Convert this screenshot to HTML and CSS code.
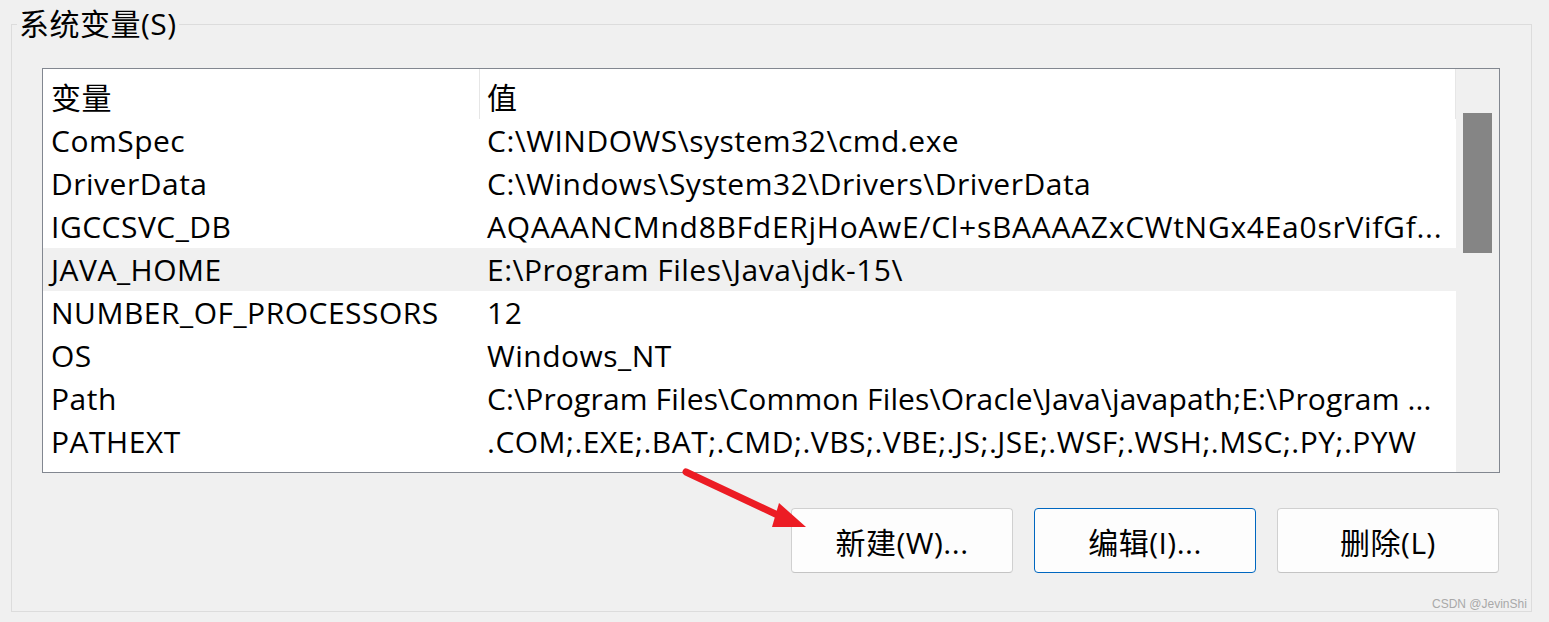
FILE: index.html
```html
<!DOCTYPE html>
<html lang="zh-CN">
<head>
<meta charset="utf-8">
<title>系统变量</title>
<link rel="stylesheet" href="styles.css">
</head>
<body>
<fieldset class="group">
  <legend class="group-title">系统变量(S)</legend>
  <div class="listbox">
    <div class="table">
      <div class="row head">
        <div class="cell name">变量</div>
        <div class="cell value">值</div>
      </div>
      <div class="row"><div class="cell name">ComSpec</div><div class="cell value">C:\WINDOWS\system32\cmd.exe</div></div>
      <div class="row"><div class="cell name">DriverData</div><div class="cell value">C:\Windows\System32\Drivers\DriverData</div></div>
      <div class="row"><div class="cell name">IGCCSVC_DB</div><div class="cell value loose">AQAAANCMnd8BFdERjHoAwE/Cl+sBAAAAZxCWtNGx4Ea0srVifGf...</div></div>
      <div class="row selected"><div class="cell name">JAVA_HOME</div><div class="cell value">E:\Program Files\Java\jdk-15\</div></div>
      <div class="row"><div class="cell name">NUMBER_OF_PROCESSORS</div><div class="cell value">12</div></div>
      <div class="row"><div class="cell name">OS</div><div class="cell value">Windows_NT</div></div>
      <div class="row"><div class="cell name">Path</div><div class="cell value tight">C:\Program Files\Common Files\Oracle\Java\javapath;E:\Program ...</div></div>
      <div class="row"><div class="cell name">PATHEXT</div><div class="cell value">.COM;.EXE;.BAT;.CMD;.VBS;.VBE;.JS;.JSE;.WSF;.WSH;.MSC;.PY;.PYW</div></div>
    </div>
    <div class="scrollbar"><div class="thumb"></div></div>
  </div>
  <div class="buttons">
    <button class="btn">新建(W)...</button>
    <button class="btn focused">编辑(I)...</button>
    <button class="btn">删除(L)</button>
  </div>
</fieldset>
<svg class="arrow" width="140" height="80" viewBox="0 0 140 80">
  <line x1="6" y1="7" x2="104" y2="53" stroke="#ec1c24" stroke-width="7" stroke-linecap="round"/>
  <polygon points="99,38 126,62 92,62" fill="#ec1c24"/>
</svg>
<div class="watermark">CSDN @JevinShi</div>
</body>
</html>
```

FILE: styles.css
```css
html, body {
  margin: 0;
  padding: 0;
}
body {
  background: #f0f0f0;
  width: 1549px;
  height: 622px;
  overflow: hidden;
  position: relative;
  font-family: "Open Sans", "Noto Sans CJK SC", sans-serif;
  color: #000;
}
.group {
  margin: 7px 17px 10px 11px;
  padding: 0;
  border: 1px solid #dcdcdc;
  height: 605px;
  box-sizing: border-box;
  min-width: 0;
}
.group-title {
  font-size: 30px;
  letter-spacing: 0.5px;
  line-height: 34px;
  padding: 0 2px;
  margin-left: 5px;
}
.listbox {
  margin: 27px 31px 0 30px;
  height: 405px;
  border: 1px solid #828790;
  box-sizing: border-box;
  background: #fff;
  display: flex;
}
.table {
  flex: 1;
  min-width: 0;
}
.row {
  display: flex;
  height: 43px;
  align-items: center;
  font-size: 30px;
  letter-spacing: 0.5px;
}
.row.head {
  height: 50px;
  border-right: 1px solid #e6e6e6;
}
.row.head .name {
  border-right: 1px solid #e6e6e6;
  align-self: stretch;
  display: flex;
  align-items: center;
  padding-top: 4px;
  box-sizing: border-box;
}
.row.head .value {
  padding-top: 4px;
}
.row.selected {
  background: #f0f0f0;
}
.cell {
  white-space: nowrap;
  overflow: hidden;
}
.name {
  width: 437px;
  padding-left: 8px;
  box-sizing: border-box;
  flex: none;
}
.value {
  padding-left: 7px;
  flex: 1;
  min-width: 0;
}
.value.tight {
  letter-spacing: 0.15px;
}
.value.loose {
  letter-spacing: 0.72px;
}
.scrollbar {
  width: 43px;
  flex: none;
  background: #f0f0f0;
  padding: 44px 7px 0 7px;
  box-sizing: border-box;
}
.thumb {
  height: 140px;
  background: #858585;
}
.buttons {
  display: flex;
  justify-content: flex-end;
  gap: 21px;
  margin: 35px 32px 0 0;
}
.btn {
  width: 222px;
  height: 65px;
  border: 1px solid #d0d0d0;
  border-bottom-color: #c4c4c4;
  border-radius: 4px;
  background: #fdfdfd;
  font-family: "Open Sans", "Noto Sans CJK SC", sans-serif;
  font-size: 30px;
  letter-spacing: 0.5px;
  color: #000;
  padding: 0;
}
.btn.focused {
  border-color: #0067c0;
}
.arrow {
  position: absolute;
  left: 680px;
  top: 465px;
}
.watermark {
  position: absolute;
  left: 1432px;
  top: 597px;
  font-family: "Liberation Sans", sans-serif;
  font-size: 12px;
  color: #a9a9a9;
}
```
